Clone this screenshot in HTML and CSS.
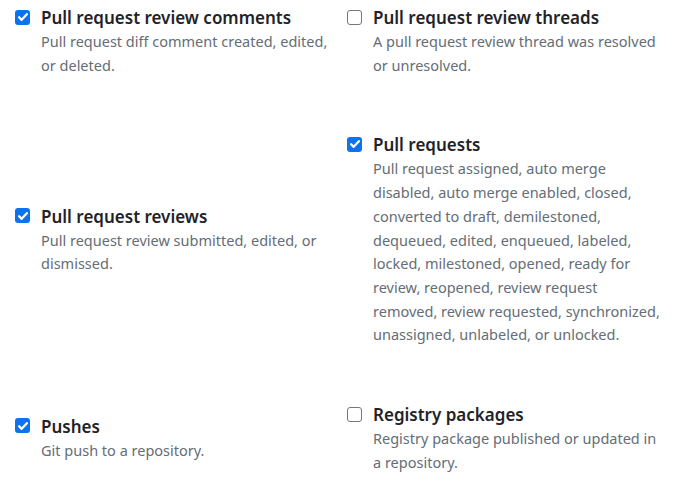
FILE: index.html
```html
<!DOCTYPE html>
<html lang="en">
<head>
<meta charset="utf-8">
<title>Events</title>
<link rel="stylesheet" href="styles.css">
</head>
<body>
<div class="events">
  <label class="event">
    <span class="box checked"><svg viewBox="0 0 16 16" width="12" height="12"><path d="M2.8 8.4l3.4 3.4 7-7.6" fill="none" stroke="#fff" stroke-width="3" stroke-linecap="round" stroke-linejoin="round"/></svg></span>
    <span class="text">
      <span class="title">Pull request review comments</span>
      <span class="desc">Pull request diff comment created, edited, or deleted.</span>
    </span>
  </label>
  <label class="event">
    <span class="box"></span>
    <span class="text">
      <span class="title">Pull request review threads</span>
      <span class="desc">A pull request review thread was resolved or unresolved.</span>
    </span>
  </label>
  <label class="event">
    <span class="box checked"><svg viewBox="0 0 16 16" width="12" height="12"><path d="M2.8 8.4l3.4 3.4 7-7.6" fill="none" stroke="#fff" stroke-width="3" stroke-linecap="round" stroke-linejoin="round"/></svg></span>
    <span class="text">
      <span class="title">Pull request reviews</span>
      <span class="desc">Pull request review submitted, edited, or dismissed.</span>
    </span>
  </label>
  <label class="event">
    <span class="box checked"><svg viewBox="0 0 16 16" width="12" height="12"><path d="M2.8 8.4l3.4 3.4 7-7.6" fill="none" stroke="#fff" stroke-width="3" stroke-linecap="round" stroke-linejoin="round"/></svg></span>
    <span class="text">
      <span class="title">Pull requests</span>
      <span class="desc">Pull request assigned, auto merge disabled, auto merge enabled, closed, converted to draft, demilestoned, dequeued, edited, enqueued, labeled, locked, milestoned, opened, ready for review, reopened, review request removed, review requested, synchronized, unassigned, unlabeled, or unlocked.</span>
    </span>
  </label>
  <label class="event">
    <span class="box checked"><svg viewBox="0 0 16 16" width="12" height="12"><path d="M2.8 8.4l3.4 3.4 7-7.6" fill="none" stroke="#fff" stroke-width="3" stroke-linecap="round" stroke-linejoin="round"/></svg></span>
    <span class="text">
      <span class="title">Pushes</span>
      <span class="desc">Git push to a repository.</span>
    </span>
  </label>
  <label class="event">
    <span class="box"></span>
    <span class="text">
      <span class="title">Registry packages</span>
      <span class="desc">Registry package published or updated in a repository.</span>
    </span>
  </label>
</div>
</body>
</html>
```
FILE: styles.css
```css
html, body {
  margin: 0;
  background: #ffffff;
}
body {
  font-family: "Noto Sans", "Open Sans", sans-serif;
}
.events {
  display: grid;
  grid-template-columns: 332px 1fr;
  row-gap: 56px;
  align-items: center;
  padding: 6px 15px;
}
.event {
  display: flex;
  align-items: flex-start;
  gap: 11px;
}
.box {
  flex: none;
  width: 15px;
  height: 15px;
  box-sizing: border-box;
  margin-top: 3.5px;
  border: 1.5px solid #767676;
  border-radius: 3px;
  background: #fff;
  display: flex;
  align-items: center;
  justify-content: center;
}
.box.checked {
  border: none;
  background: #0d72ee;
}
.text {
  display: flex;
  flex-direction: column;
  max-width: 289px;
}
.title {
  font-size: 17px;
  font-weight: 600;
  line-height: 24px;
  color: #1f2328;
}
.desc {
  font-size: 14.5px;
  line-height: 23.7px;
  color: #656d76;
}
```
